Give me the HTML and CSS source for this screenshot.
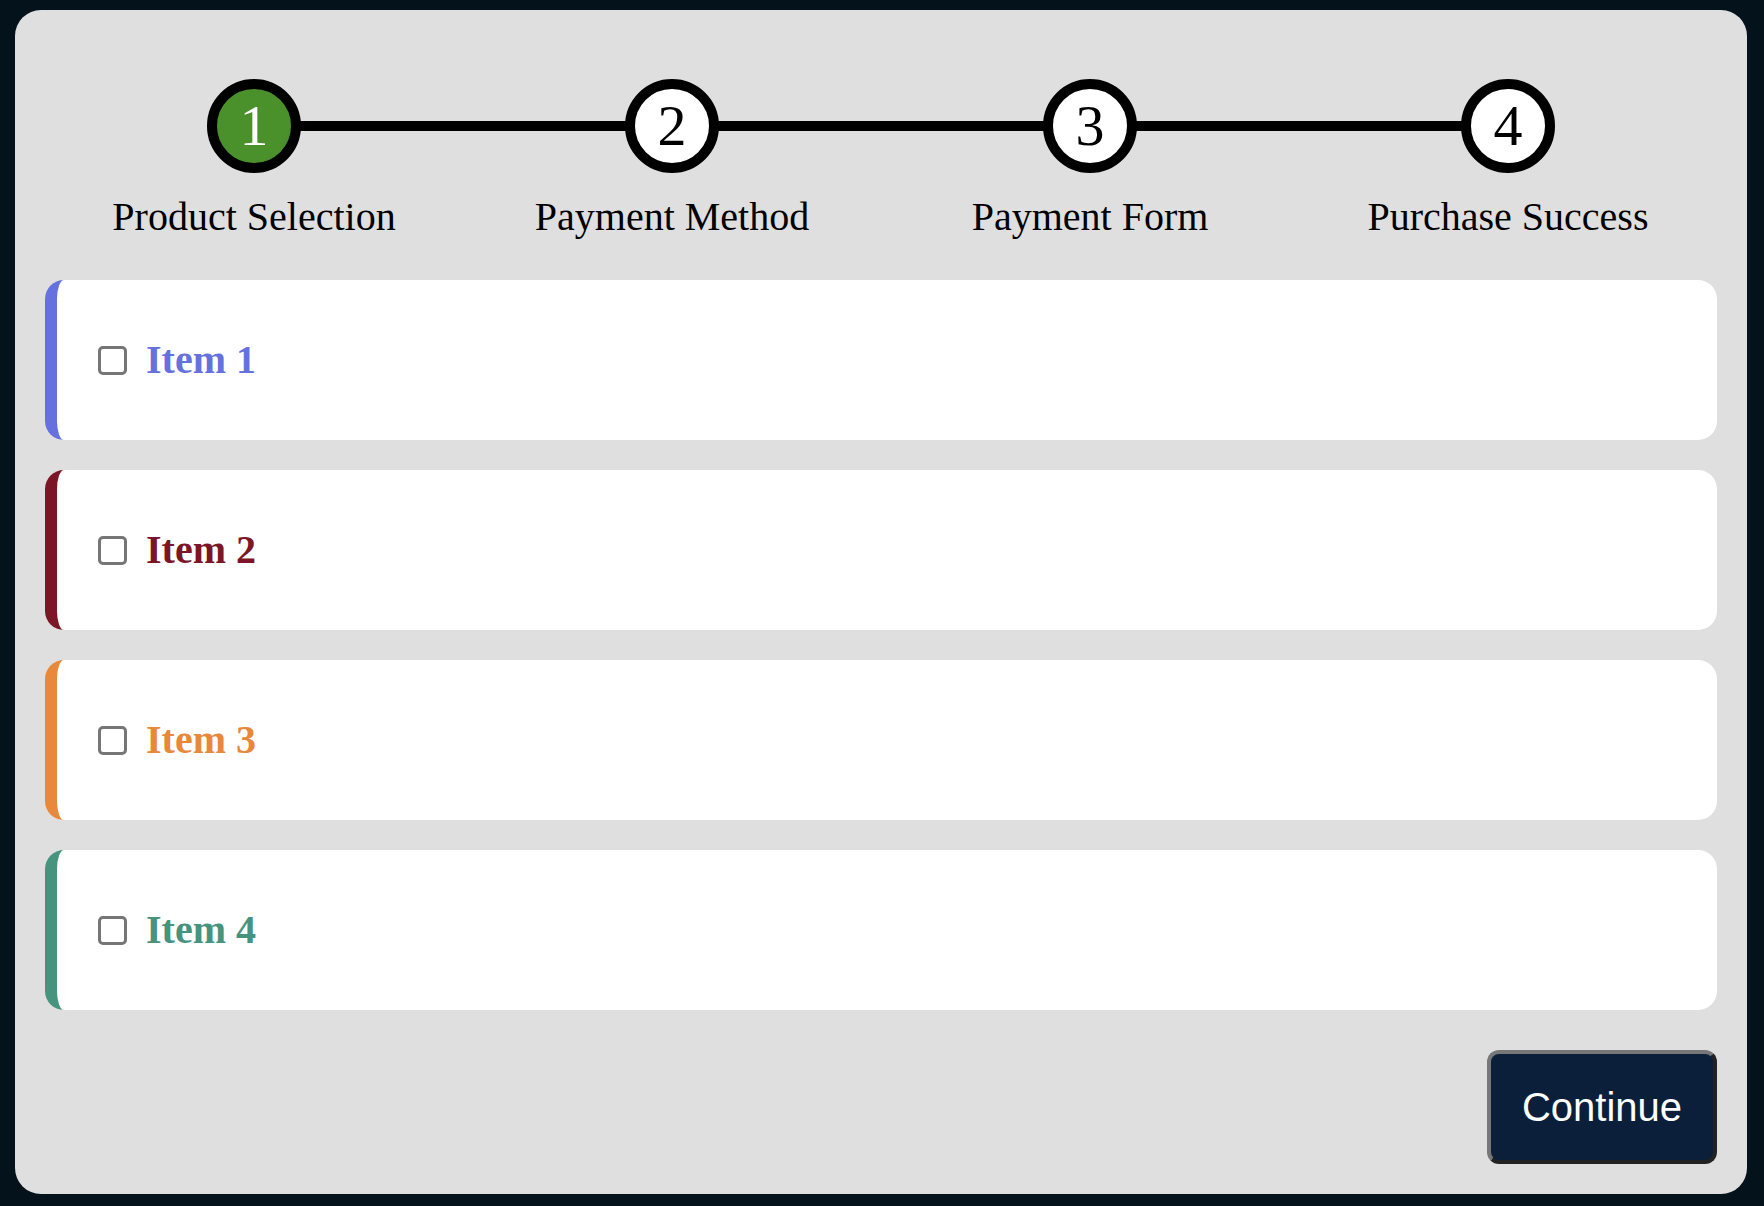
FILE: index.html
```html
<!DOCTYPE html>
<html lang="en">
<head>
<meta charset="utf-8">
<title>Checkout</title>
<link rel="stylesheet" href="styles.css">
</head>
<body>
<div class="panel">
  <ol class="stepper">
    <li class="step done"><span class="circle">1</span><span class="label">Product Selection</span></li>
    <li class="step"><span class="circle">2</span><span class="label">Payment Method</span></li>
    <li class="step"><span class="circle">3</span><span class="label">Payment Form</span></li>
    <li class="step"><span class="circle">4</span><span class="label">Purchase Success</span></li>
  </ol>
  <div class="items">
    <label class="item item-1"><input type="checkbox" class="check"><span class="name">Item 1</span></label>
    <label class="item item-2"><input type="checkbox" class="check"><span class="name">Item 2</span></label>
    <label class="item item-3"><input type="checkbox" class="check"><span class="name">Item 3</span></label>
    <label class="item item-4"><input type="checkbox" class="check"><span class="name">Item 4</span></label>
  </div>
  <div class="footer">
    <button class="continue" type="button">Continue</button>
  </div>
</div>
</body>
</html>
```
FILE: styles.css
```css
html, body {
  margin: 0;
  padding: 0;
}
body {
  background: #04121b;
  font-family: "Liberation Serif", "Times New Roman", serif;
  width: 1764px;
  height: 1206px;
  overflow: hidden;
}
.panel {
  box-sizing: border-box;
  width: 1732px;
  height: 1184px;
  margin: 10px 0 0 15px;
  padding: 69px 30px 30px;
  background: #dfdfdf;
  border-radius: 26px;
  display: flex;
  flex-direction: column;
}
.stepper {
  list-style: none;
  margin: 0 0 40px;
  padding: 0;
  display: grid;
  grid-template-columns: repeat(4, 1fr);
}
.step {
  position: relative;
  display: flex;
  flex-direction: column;
  align-items: center;
}
.step:not(:last-child)::after {
  content: "";
  position: absolute;
  left: 50%;
  width: 100%;
  top: 42px;
  height: 10px;
  background: #000;
  z-index: 0;
}
.circle {
  position: relative;
  z-index: 1;
  box-sizing: border-box;
  width: 94px;
  height: 94px;
  border: 10px solid #000;
  border-radius: 50%;
  background: #fff;
  color: #000;
  display: flex;
  align-items: center;
  justify-content: center;
  font-size: 58px;
  line-height: 1;
}
.step.done .circle {
  background: #4a912b;
  color: #fff;
}
.label {
  margin-top: 21px;
  font-size: 40px;
  line-height: 46px;
  color: #000;
  white-space: nowrap;
}
.items {
  display: flex;
  flex-direction: column;
  gap: 30px;
}
.item {
  box-sizing: border-box;
  height: 160px;
  background: #fff;
  border-left: 12px solid;
  border-radius: 19px;
  padding-left: 41px;
  display: flex;
  align-items: center;
  gap: 19px;
}
.check {
  appearance: none;
  -webkit-appearance: none;
  box-sizing: border-box;
  width: 29px;
  height: 29px;
  margin: 0;
  border: 3px solid #767676;
  border-radius: 5px;
  background: #fff;
}
.name {
  font-weight: bold;
  font-size: 40px;
  line-height: 46px;
}
.item-1 { border-left-color: #6571df; color: #6571df; }
.item-2 { border-left-color: #7c1526; color: #7c1526; }
.item-3 { border-left-color: #e7883b; color: #e7883b; }
.item-4 { border-left-color: #46937e; color: #46937e; }
.footer {
  margin-top: 40px;
  display: flex;
  justify-content: flex-end;
}
.continue {
  box-sizing: border-box;
  width: 230px;
  height: 114px;
  padding: 0;
  background: #0b1f3a;
  color: #fff;
  font-family: "Liberation Sans", Arial, sans-serif;
  font-size: 40px;
  border: 4px solid;
  border-color: #777 #222 #222 #777;
  border-radius: 12px;
}
```
